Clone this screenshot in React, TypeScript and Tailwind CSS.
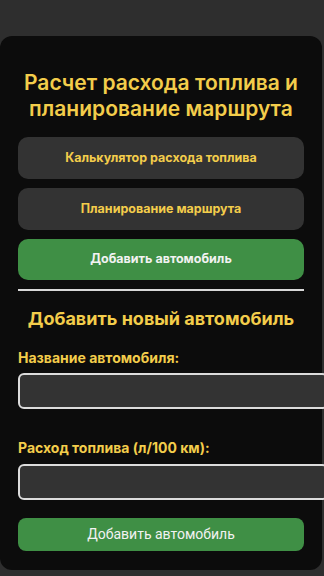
import React from "react";

export default function App() {
  const font = { fontFamily: 'Inter, "Noto Sans", "Liberation Sans", sans-serif' };
  return (
    <div className="min-h-[576px] w-[324px] overflow-hidden bg-[#2e2e2e] pt-[36px]" style={font}>
      <div className="w-[322px] rounded-[12px] bg-[#0c0c0c] px-[18px] pt-[34px] pb-[19px]">
        <h1 className="text-center text-[21px] leading-[26px] font-semibold text-[#f3cd4b]">
          Расчет расхода топлива и планирование маршрута
        </h1>
        <div className="mt-[15px] flex flex-col gap-[9px]">
          <button className="h-[42px] w-full rounded-[10px] bg-[#333333] text-[12.5px] font-bold text-[#f3cd4b]">
            Калькулятор расхода топлива
          </button>
          <button className="h-[42px] w-full rounded-[10px] bg-[#333333] text-[12.5px] font-bold text-[#f3cd4b]">
            Планирование маршрута
          </button>
          <button className="h-[41px] w-full rounded-[10px] bg-[#3f8f45] text-[12.5px] font-bold text-[#f2f2f2]">
            Добавить автомобиль
          </button>
        </div>
        <div className="mt-[9px] h-[2px] w-full bg-[#d8d8d8]" />
        <h2 className="mt-[16px] text-center text-[18px] leading-[24px] font-bold text-[#f3cd4b]">
          Добавить новый автомобиль
        </h2>
        <div className="mt-[18px] text-[14px] leading-[18px] font-bold text-[#f3cd4b]">Название автомобиля:</div>
        <div className="mt-[6px] h-[36px] w-[310px] rounded-[6px] border-2 border-[#dcdcdc] bg-[#333333]" />
        <div className="mt-[30px] text-[14px] leading-[18px] font-bold text-[#f3cd4b]">
          Расход топлива (л/100 км):
        </div>
        <div className="mt-[7px] h-[36px] w-[310px] rounded-[6px] border-2 border-[#dcdcdc] bg-[#333333]" />
        <button
          className="mt-[18px] h-[33px] w-full rounded-[8px] bg-[#3f8f45] text-[14px] text-[#f2f2f2]"
          style={{ fontFamily: 'Roboto, "Liberation Sans", sans-serif' }}
        >
          Добавить автомобиль
        </button>
      </div>
    </div>
  );
}
